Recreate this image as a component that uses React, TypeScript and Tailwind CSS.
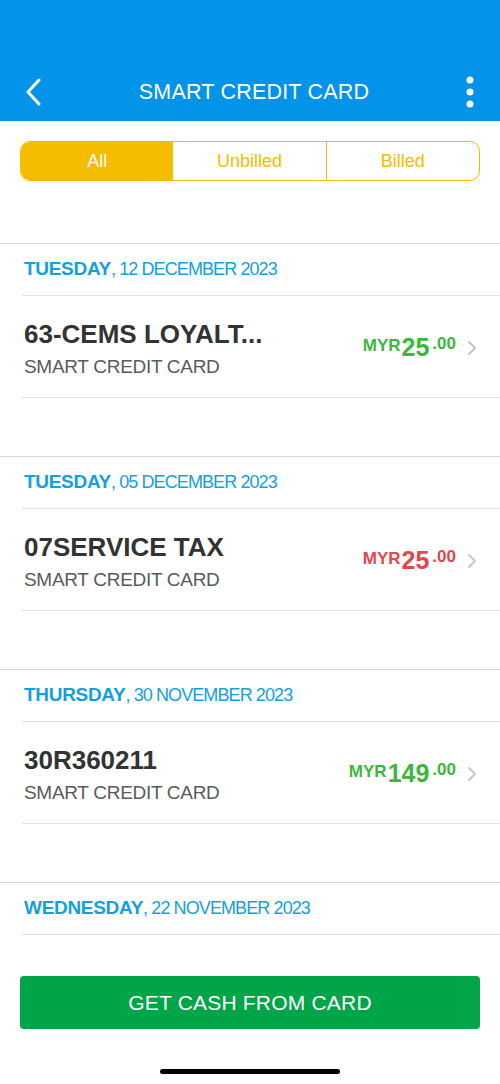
import React from 'react';

type Txn = {
  day: string;
  date: string;
  title: string;
  amount: string;
  debit?: boolean;
};

const txns: Txn[] = [
  { day: 'TUESDAY', date: '12 DECEMBER 2023', title: '63-CEMS LOYALT...', amount: '25' },
  { day: 'TUESDAY', date: '05 DECEMBER 2023', title: '07SERVICE TAX', amount: '25', debit: true },
  { day: 'THURSDAY', date: '30 NOVEMBER 2023', title: '30R360211', amount: '149' },
  { day: 'WEDNESDAY', date: '22 NOVEMBER 2023', title: 'DUITNOW PAY TO', amount: '50' },
];

const Section: React.FC<{ t: Txn }> = ({ t }) => (
  <div className="border-t border-[#d6d6d6]">
    <div className="h-[51px] flex items-center pl-[24px] text-[#149fe0]">
      <span className="font-bold text-[19px] tracking-[-0.3px]">{t.day}</span>
      <span className="text-[18px] tracking-[-0.9px]">, {t.date}</span>
    </div>
    <div className="ml-[22px] border-t border-[#e3e3e3]">
      <div className="h-[101px] flex items-center pr-[22px]">
        <div className="flex-1 pl-[2px] pt-[6px]">
          <div className="text-[26px] leading-[28px] font-bold text-[#333333]">{t.title}</div>
          <div className="mt-[7px] text-[19px] leading-[24px] text-[#5a5a5a] tracking-[-0.3px]">SMART CREDIT CARD</div>
        </div>
        <div className={`flex items-start font-bold ${t.debit ? 'text-[#e3474a]' : 'text-[#3bb83c]'}`}>
          <span className="text-[17px] leading-[18px] mt-[3px]">MYR</span>
          <span className="text-[25px] leading-[26px] ml-[1px]">{t.amount}</span>
          <span className="text-[17px] leading-[18px] mt-[1px] ml-[3px]">.00</span>
        </div>
        <svg className="ml-[10px] mt-[2px]" width="12" height="18" viewBox="0 0 12 18" fill="none">
          <path d="M3 3l6 6-6 6" stroke="#c6c6c6" strokeWidth="2" strokeLinecap="round" strokeLinejoin="round" />
        </svg>
      </div>
    </div>
    <div className="ml-[22px] border-t border-[#e3e3e3] h-[59px]" />
  </div>
);

export default function App() {
  return (
    <div
      className="w-[500px] h-[1084px] flex flex-col bg-white overflow-hidden"
      style={{ fontFamily: '"Liberation Sans", Arial, sans-serif' }}
    >
      <div className="h-[121px] shrink-0 bg-[#0394e9] flex items-end pb-[14px] px-[24px]">
        <div className="w-full h-[30px] flex items-center justify-between">
          <svg width="20" height="28" viewBox="0 0 20 28" fill="none">
            <path d="M15 2L4 14l11 12" stroke="white" strokeWidth="3" strokeLinecap="round" strokeLinejoin="round" />
          </svg>
          <div className="text-white text-[21.5px] font-medium tracking-[0.2px]">SMART CREDIT CARD</div>
          <svg width="12" height="32" viewBox="0 0 12 32" fill="white">
            <circle cx="6" cy="4" r="3.5" />
            <circle cx="6" cy="16" r="3.5" />
            <circle cx="6" cy="28" r="3.5" />
          </svg>
        </div>
      </div>

      <div className="shrink-0 px-[20px] pt-[20px] pb-[62px]">
        <div className="h-[40px] flex rounded-[10px] border border-[#f5bd00] overflow-hidden text-[18px]">
          <div className="flex-1 bg-[#f5bd00] text-white flex items-center justify-center">All</div>
          <div className="flex-1 border-r border-[#f5bd00] text-[#f5bd00] flex items-center justify-center">Unbilled</div>
          <div className="flex-1 text-[#f5bd00] flex items-center justify-center">Billed</div>
        </div>
      </div>

      <div className="flex-1 min-h-0 overflow-hidden">
        {txns.map((t, i) => (
          <Section key={i} t={t} />
        ))}
      </div>

      <div className="h-[121px] shrink-0 bg-white px-[20px] pt-[13px] flex flex-col items-center">
        <button className="w-full h-[53px] rounded-[4px] bg-[#00a547] text-white text-[21px] tracking-[0.2px]">
          GET CASH FROM CARD
        </button>
        <div className="mt-[40px] w-[180px] h-[5px] rounded-full bg-black" />
      </div>
    </div>
  );
}
